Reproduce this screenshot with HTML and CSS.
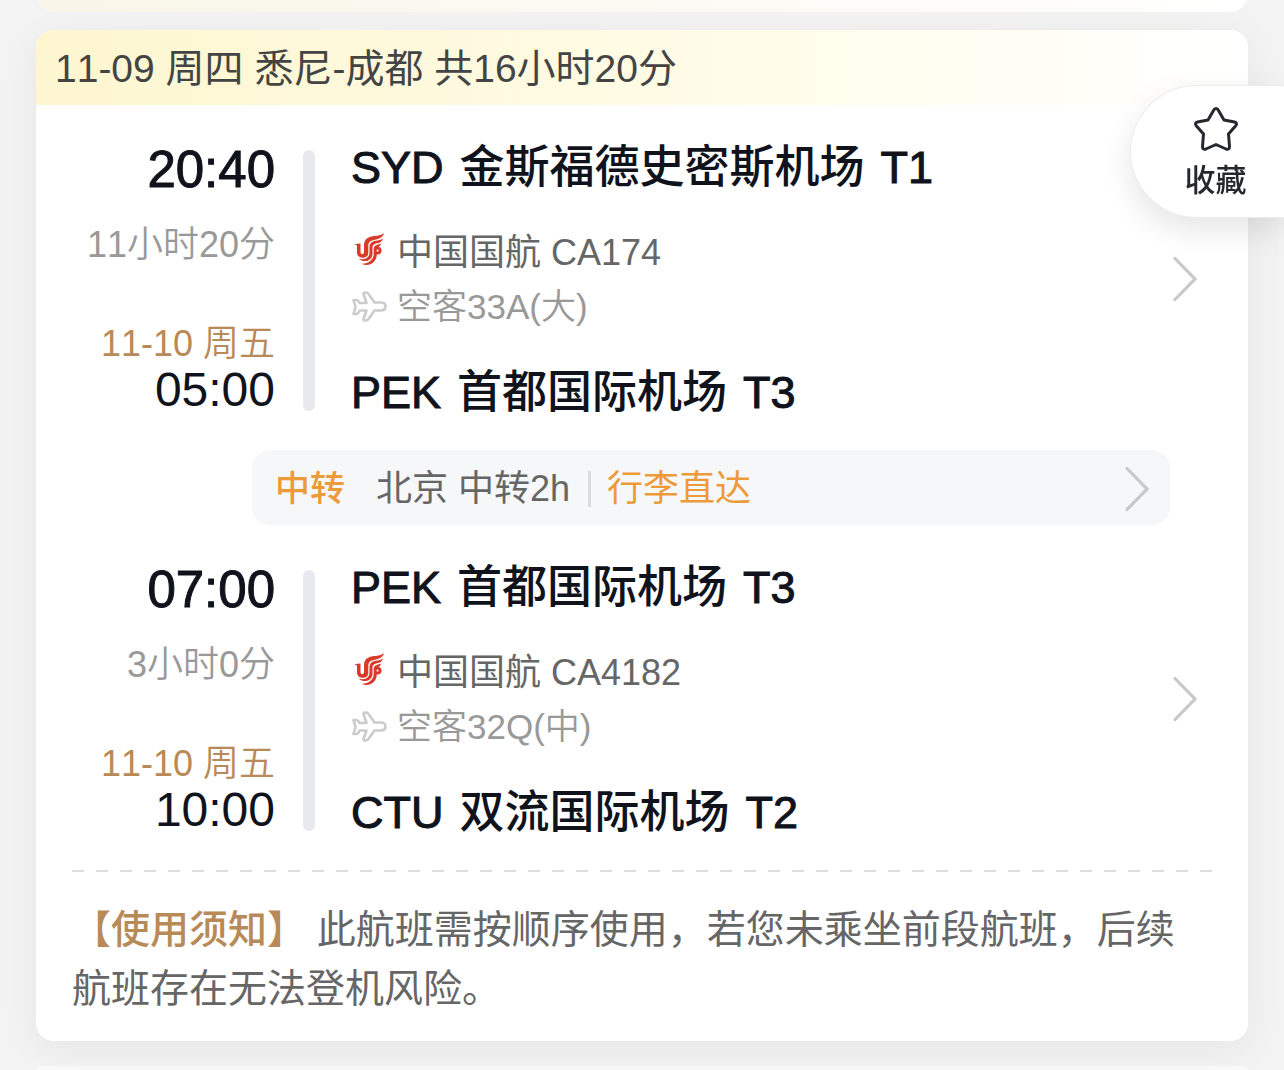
FILE: index.html
```html
<!DOCTYPE html>
<html lang="zh-CN">
<head>
<meta charset="utf-8">
<meta name="viewport" content="width=device-width, initial-scale=1">
<title>航班详情</title>
<link rel="stylesheet" href="styles.css">
</head>
<body>
<svg class="defs" aria-hidden="true">
  <symbol id="chevron" viewBox="0 0 26 46"><path d="M3 2.500L23 23L3 43.500" fill="none" stroke="currentColor" stroke-width="3.200" stroke-linecap="round" stroke-linejoin="miter"/></symbol>
  <symbol id="phoenix" viewBox="1 2 36 36">
    <g fill="currentColor">
      <path d="M4.500 14.500Q7 13.500 10.500 13.500V22C10.500 25 14 25 14 22V15C14 8 20 6 26 6Q31 5.500 34 3.300Q33 8 27 9.200C21 10.300 18.300 11.500 18.300 16V23C18.300 29.500 7 29.500 7 22.500V15.500Z"/>
      <path d="M33 8.500Q32 12.500 27 13.300C23.500 14 22.500 15.500 22.500 18V23.500C22.500 31 14 33.500 8.500 28.500C14.500 30.500 19.500 28 19.500 22.500V17.500C19.500 12 23 11 27.500 10.500Q31 10 33 8.500Z"/>
      <path d="M31.500 13.500Q30 16.200 28.500 16.700C33.500 18 32 25 27.500 24.500C24.500 24 25.500 20.800 28 21.800C29 21 28.700 19 26.700 19.500V25C26.700 32 19 37.500 11.500 33.700C18 34 23.700 30 23.700 24V19C23.700 15 27.500 14.800 31.500 13.500Z"/>
    </g>
  </symbol>
  <symbol id="plane" viewBox="3 3 36 36"><path d="M5.500 14H8.500Q10 14 11.500 17H18.500L15.500 8Q15.500 6.500 17 6.500H18Q19.500 6.500 20.500 8L26.500 16.500H33.500Q37.500 17 37.500 20.500Q37.500 24 33.500 24.500H26.500L20.500 33Q19.500 34.500 18 34.500H17Q15.500 34.500 15.500 33L18.500 24.500H11.500Q10 28 8.500 28H5.500L7.500 21Z" fill="none" stroke="currentColor" stroke-width="2.700" stroke-linejoin="round"/></symbol>
  <symbol id="star" viewBox="0 0 46 46"><path d="M23 2.500Q24.500 2.500 25.500 4.500L31 14L41.500 16Q45 17 42.500 20L35.500 28L36.500 40.500Q36.500 44 33 43L23 38.500L13 43Q9.500 44 9.500 40.500L10.500 28L3.500 20Q1 17 4.500 16L15 14L20.500 4.500Q21.500 2.500 23 2.500Z" fill="none" stroke="currentColor" stroke-width="3" stroke-linejoin="round"/></symbol>
</svg>
<main class="page">
  <div class="card card-prev"></div>
  <article class="card trip">
    <h1 class="trip-head">11-09 周四 悉尼-成都 共16小时20分</h1>
    <section class="segment">
      <div class="times">
        <time class="depart">20:40</time>
        <span class="duration">11小时20分</span>
        <span class="date">11-10 周五</span>
        <time class="arrive">05:00</time>
      </div>
      <div class="bar"></div>
      <div class="places">
        <h2 class="airport"><span class="code">SYD</span> <span>金斯福德史密斯机场</span> <span class="code">T1</span></h2>
        <p class="carrier"><svg class="icon"><use href="#phoenix"/></svg>中国国航 CA174</p>
        <p class="aircraft"><svg class="icon"><use href="#plane"/></svg>空客33A(大)</p>
        <h2 class="airport last"><span class="code">PEK</span> <span>首都国际机场</span> <span class="code">T3</span></h2>
      </div>
      <button class="more" type="button" aria-label="航班详情"><svg class="chevron"><use href="#chevron"/></svg></button>
    </section>
    <button class="transfer" type="button">
      <span class="tag">中转</span>
      <span class="stop">北京 中转2h</span>
      <span class="baggage">行李直达</span>
      <svg class="chevron"><use href="#chevron"/></svg>
    </button>
    <section class="segment">
      <div class="times">
        <time class="depart">07:00</time>
        <span class="duration">3小时0分</span>
        <span class="date">11-10 周五</span>
        <time class="arrive">10:00</time>
      </div>
      <div class="bar"></div>
      <div class="places">
        <h2 class="airport"><span class="code">PEK</span> <span>首都国际机场</span> <span class="code">T3</span></h2>
        <p class="carrier"><svg class="icon"><use href="#phoenix"/></svg>中国国航 CA4182</p>
        <p class="aircraft"><svg class="icon"><use href="#plane"/></svg>空客32Q(中)</p>
        <h2 class="airport last"><span class="code">CTU</span> <span>双流国际机场</span> <span class="code">T2</span></h2>
      </div>
      <button class="more" type="button" aria-label="航班详情"><svg class="chevron"><use href="#chevron"/></svg></button>
    </section>
    <p class="notice"><strong>【使用须知】</strong> 此航班需按顺序使用，若您未乘坐前段航班，后续航班存在无法登机风险。</p>
  </article>
  <div class="card card-next"></div>
</main>
<button class="favorite" type="button"><svg class="star"><use href="#star"/></svg>收藏</button>
</body>
</html>
```
FILE: styles.css
```css
* { box-sizing: border-box; margin: 0; padding: 0; }
body {
  background: #f3f3f3;
  color: #10131c;
  font-family: "Liberation Sans", "Noto Sans CJK SC", sans-serif;
  font-size: 36px;
  line-height: 36px;
  font-kerning: none;
}
h1, h2 { font-weight: 400; }
button { border: 0; background: none; color: inherit; font: inherit; cursor: pointer; }
.defs { position: absolute; width: 0; height: 0; }
.page {
  display: flex;
  flex-direction: column;
  max-height: 100vh;
  padding: 0 36px;
  overflow: hidden;
}
.card {
  flex: none;
  background: #fff;
  border-radius: 18px;
  box-shadow: 0 8px 40px rgba(0, 0, 0, 0.06);
}
.card-prev {
  height: 40px;
  margin-top: -28px;
  background: linear-gradient(90deg, #f9f5e8, #fff);
  box-shadow: none;
}
.card-next {
  flex: 0 1 60px;
  margin-top: 25px;
  border-radius: 18px 18px 0 0;
  background: #fafafa;
  box-shadow: none;
}
.trip { margin-top: 18px; padding-bottom: 23px; position: relative; }
.trip-head {
  padding: 2px 19px 0;
  border-radius: 18px 18px 0 0;
  background: linear-gradient(90deg, #fdf6cf, #fffce9 60%, #fff);
  color: #444;
  font-size: 39px;
  line-height: 73px;
}
.segment {
  display: grid;
  grid-template-columns: 239px 12px 1fr 48px;
  column-gap: 28px;
  min-height: 261px;
  margin: 45px 39px 0 0;
}
.times { display: flex; flex-direction: column; text-align: right; }
.depart { font-size: 51px; line-height: 40px; -webkit-text-stroke: 1px; }
.duration { margin-top: 37px; color: #999; font-weight: 350; }
.date { margin-top: auto; color: #b88a57; font-weight: 350; }
.arrive { margin-top: 7px; font-size: 48px; line-height: 42px; }
.bar { border-radius: 6px; background: #e8e9ee; }
.places { display: flex; flex-direction: column; padding-left: 8px; }
.airport {
  display: flex;
  gap: 16px;
  font-size: 45px;
  font-weight: 500;
  white-space: nowrap;
}
.code { -webkit-text-stroke: 1px; }
.last { margin-top: auto; }
.carrier, .aircraft { display: flex; align-items: center; gap: 10px; }
.carrier { margin-top: 49px; color: #666; }
.aircraft { margin-top: 18px; color: #999; font-size: 35px; font-weight: 350; }
.icon { width: 36px; height: 36px; overflow: visible; }
.carrier .icon { color: #d93a2b; margin-top: -6px; }
.aircraft .icon { color: #ccc; }
.more { display: flex; align-items: center; justify-content: center; padding-bottom: 4px; }
.chevron { width: 26px; height: 46px; color: #c8c8c8; }
.transfer {
  display: flex;
  align-items: center;
  width: calc(100% - 294px);
  height: 75px;
  margin: 39px 78px 0 216px;
  padding: 2px 20px 0 23px;
  border-radius: 18px;
  background: #f6f7f9;
}
.tag { color: #ec9a3a; font-size: 35px; font-weight: 500; }
.stop { margin-left: 31px; padding-right: 18px; border-right: 3px solid #ddd; color: #666; }
.baggage { margin-left: 16px; color: #ec9a3a; }
.transfer .chevron { margin-left: auto; }
.notice {
  margin: 39px 36px 0;
  padding-top: 30px;
  background: repeating-linear-gradient(90deg, #ddd 0 12px, transparent 12px 24px) top / 100% 2px no-repeat;
  color: #666;
  font-size: 39px;
  line-height: 59px;
}
.notice strong { color: #b88a57; font-weight: 500; }
.favorite {
  position: fixed;
  top: 85px;
  right: 0;
  display: flex;
  flex-direction: column;
  align-items: center;
  gap: 11px;
  width: 154px;
  height: 133px;
  padding: 20px 0 0 16px;
  border: 1px solid #ececec;
  border-right: 0;
  border-radius: 67px 0 0 67px;
  background: #fff;
  box-shadow: 0 12px 30px rgba(0, 0, 0, 0.1);
  color: #25272e;
  font-size: 31px;
  font-weight: 500;
}
.star { width: 46px; height: 46px; }
```
